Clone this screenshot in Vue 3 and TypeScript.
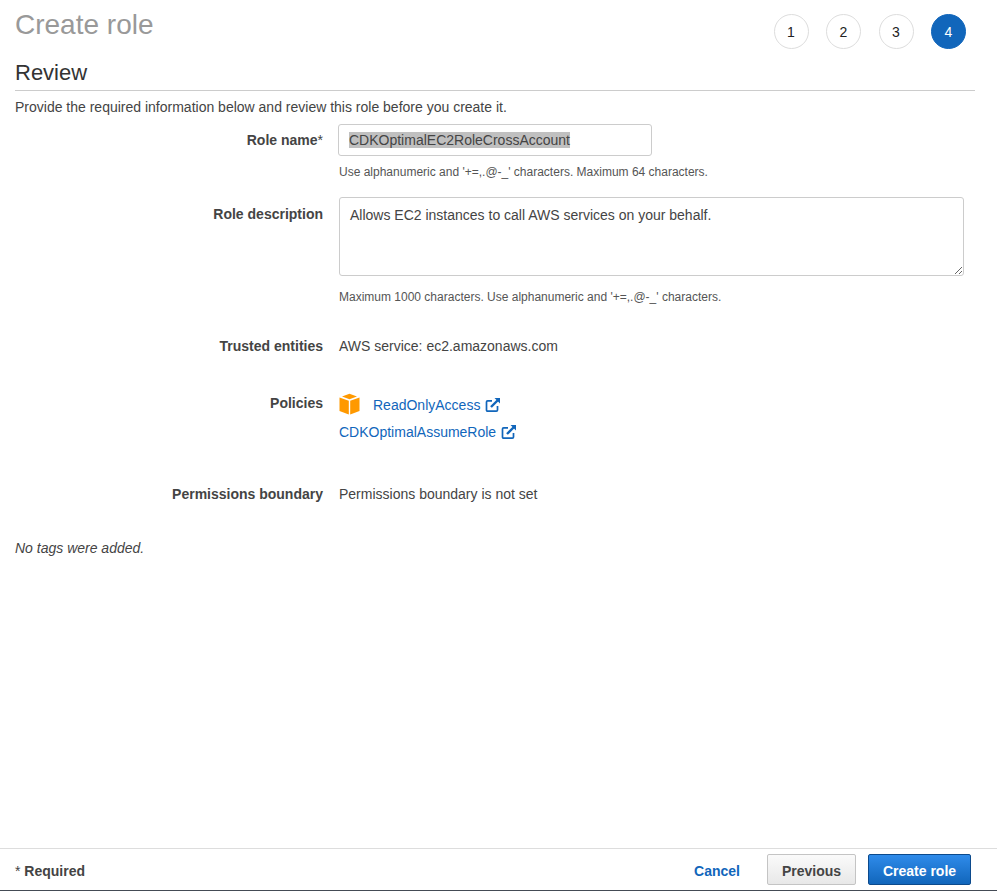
<script setup lang="ts">
const steps: number[] = [1, 2, 3, 4]
const description = 'Allows EC2 instances to call AWS services on your behalf.'
</script>

<template>
  <div class="page">
    <main class="main">
      <header class="top">
        <h1 class="title">Create role</h1>
        <ol class="steps">
          <li v-for="s in steps" :key="s" class="step" :class="{ active: s === 4 }">{{ s }}</li>
        </ol>
      </header>
      <h2 class="section">Review</h2>
      <p class="intro">Provide the required information below and review this role before you create it.</p>

      <div class="row row-name">
        <div class="label">Role name<span class="star">*</span></div>
        <div class="value">
          <div class="input"><span class="selected">CDKOptimalEC2RoleCrossAccount</span></div>
          <div class="hint">Use alphanumeric and '+=,.@-_' characters. Maximum 64 characters.</div>
        </div>
      </div>

      <div class="row row-desc">
        <div class="label">Role description</div>
        <div class="value">
          <textarea class="area" :value="description"></textarea>
          <div class="hint hint-desc">Maximum 1000 characters. Use alphanumeric and '+=,.@-_' characters.</div>
        </div>
      </div>

      <div class="row row-trust">
        <div class="label">Trusted entities</div>
        <div class="value text">AWS service: ec2.amazonaws.com</div>
      </div>

      <div class="row row-policies">
        <div class="label">Policies</div>
        <div class="value">
          <div class="policy first">
            <svg class="cube" width="21" height="22" viewBox="0 0 21 22">
              <path d="M0.5 4.6 L9.8 7.8 V21.5 L0.5 18 Z" fill="#ff9900" />
              <path d="M20.5 4.6 L11.2 7.8 V21.5 L20.5 18 Z" fill="#ff9900" />
              <path d="M3 3.4 L10.5 0.8 L18 3.4 L10.5 6.2 Z" fill="#ff9900" />
            </svg>
            <a class="link link-first">ReadOnlyAccess
              <svg class="ext" width="16" height="16" viewBox="0 0 16 16">
                <path d="M12.5 9 V13 Q12.5 14.2 11.3 14.2 H2.7 Q1.5 14.2 1.5 13 V5 Q1.5 3.8 2.7 3.8 H7" fill="none" stroke="currentColor" stroke-width="1.7" />
                <path d="M6 10 L13 3" fill="none" stroke="currentColor" stroke-width="2.4" />
                <path d="M9.5 1 H15 V6.5 Z" fill="currentColor" />
              </svg>
            </a>
          </div>
          <div class="policy">
            <a class="link">CDKOptimalAssumeRole
              <svg class="ext" width="16" height="16" viewBox="0 0 16 16">
                <path d="M12.5 9 V13 Q12.5 14.2 11.3 14.2 H2.7 Q1.5 14.2 1.5 13 V5 Q1.5 3.8 2.7 3.8 H7" fill="none" stroke="currentColor" stroke-width="1.7" />
                <path d="M6 10 L13 3" fill="none" stroke="currentColor" stroke-width="2.4" />
                <path d="M9.5 1 H15 V6.5 Z" fill="currentColor" />
              </svg>
            </a>
          </div>
        </div>
      </div>

      <div class="row row-boundary">
        <div class="label">Permissions boundary</div>
        <div class="value text">Permissions boundary is not set</div>
      </div>

      <p class="tags">No tags were added.</p>
    </main>

    <footer class="footer">
      <div class="required"><span class="req-star">*</span> Required</div>
      <div class="actions">
        <a class="cancel">Cancel</a>
        <button class="btn prev" type="button">Previous</button>
        <button class="btn primary" type="button">Create role</button>
      </div>
    </footer>
  </div>
</template>

<style>
html, body { margin: 0; background: #fff; overflow: hidden; }
</style>

<style scoped>
.page {
  width: 997px;
  height: 891px;
  display: flex;
  flex-direction: column;
  font-family: "Liberation Sans", Arial, sans-serif;
  font-size: 14px;
  color: #444;
  box-sizing: border-box;
  border-bottom: 1px solid #444b55;
}
.main { flex: 1; padding: 0 22px 0 15px; min-height: 0; }
.top { display: flex; justify-content: space-between; height: 58px; }
.title { margin: 7px 0 0; font-size: 28px; line-height: 36px; font-weight: 400; color: #999; }
.steps { display: flex; list-style: none; margin: 14px 9px 0 0; padding: 0; }
.step {
  width: 35px; height: 35px; box-sizing: border-box;
  border: 1px solid #ddd; border-radius: 50%;
  display: flex; align-items: center; justify-content: center;
  color: #222; margin-left: 17.5px;
}
.step.active { background: #1166bb; border-color: #1166bb; color: #fff; }
.section {
  margin: 0; height: 33px; box-sizing: border-box;
  font-size: 22px; line-height: 29px; font-weight: 400; color: #333;
  border-bottom: 1px solid #ccc;
}
.intro { margin: 7px 0 0; line-height: 18px; color: #444; }
.row { display: grid; grid-template-columns: 308px 1fr; column-gap: 15px; }
.label { text-align: right; font-weight: 700; color: #444; line-height: 20px; }
.star { font-weight: 400; }
.value { min-width: 0; }
.text { line-height: 20px; }
.row-name { margin-top: 8px; }
.row-name .label { padding-top: 6px; }
.input {
  width: 314px; height: 32px; box-sizing: border-box;
  border: 1px solid #ccc; border-radius: 3px;
  padding: 0 10px; line-height: 28px; color: #444; background: #fff;
}
.selected { background: #c0c0c0; display: inline-block; line-height: 16px; vertical-align: middle; }
.hint { font-size: 12px; line-height: 16px; color: #555; margin: 8px 0 0 1px; }
.row-desc { margin-top: 17px; }
.row-desc .label { padding-top: 7px; }
.area {
  display: block; width: 625px; height: 79px; box-sizing: border-box; margin: 0 0 0 1px;
  border: 1px solid #ccc; border-radius: 3px; padding: 8px 10px; outline: none;
  font: 14px/18px "Liberation Sans", Arial, sans-serif; color: #444; background: #fff;
}
.hint-desc { margin: 13px 0 0 1px; }
.row-trust { margin-top: 31px; }
.row-policies { margin-top: 37px; }
.policy { display: flex; align-items: center; height: 22px; }
.policy.first { margin-top: -1px; height: 24px; }
.policy + .policy { margin-top: 5px; padding-left: 1px; }
.cube { flex: none; margin-left: 0.5px; }
.link { color: #1166bb; display: inline-flex; align-items: center; gap: 5px; line-height: 20px; white-space: nowrap; }
.link-first { margin-left: 13.5px; padding-top: 2px; }
.row-boundary { margin-top: 41px; }
.row-boundary .value { padding-left: 1px; }
.row-trust .value { padding-left: 1px; }
.tags { margin: 35px 0 0; font-style: italic; line-height: 18px; color: #444; }
.footer {
  flex: none; height: 42px; box-sizing: border-box;
  border-top: 1px solid #ddd;
  display: flex; align-items: center; justify-content: space-between;
  padding: 0 26px 0 15px;
}
.required { font-weight: 700; color: #444; padding-top: 2px; }
.req-star { font-weight: 400; }
.actions { display: flex; align-items: center; }
.cancel { color: #1166bb; font-weight: 700; margin-right: 27px; padding-top: 2px; }
.btn {
  height: 31px; box-sizing: border-box; border-radius: 2px; padding: 2px 0 0;
  font: 700 14px "Liberation Sans", Arial, sans-serif; cursor: pointer;
}
.prev {
  width: 89px; border: 1px solid #c4c4c4; color: #444;
  background: linear-gradient(#fafafa, #e8e8e8);
}
.primary {
  width: 103px; margin-left: 12px; border: 1px solid #0c4a8c; color: #fff;
  background: linear-gradient(#2f8bea, #1166bb);
}
</style>
